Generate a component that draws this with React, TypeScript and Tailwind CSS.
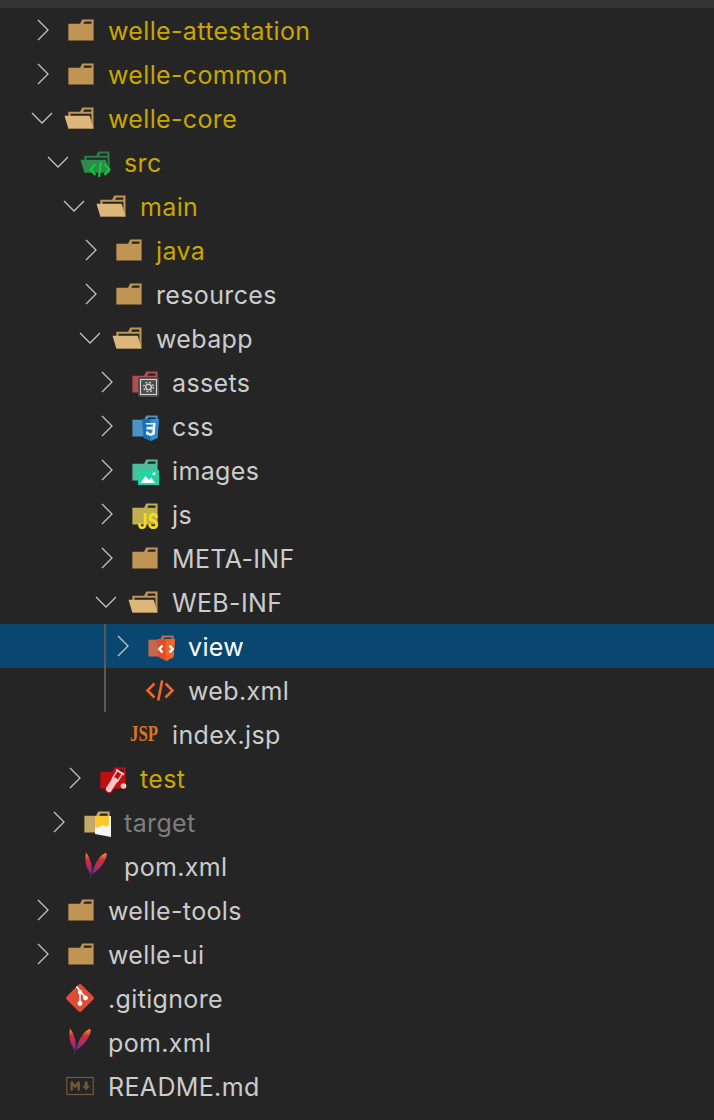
import type { ReactNode } from "react"

type IconName =
  | "folder"
  | "open"
  | "src"
  | "assets"
  | "css"
  | "images"
  | "js"
  | "view"
  | "xml"
  | "jsp"
  | "test"
  | "target"
  | "maven"
  | "git"
  | "md"

type Row = {
  name: string
  level: number
  icon: IconName
  arrow?: "right" | "down"
  tone?: "yellow" | "muted"
  selected?: boolean
}

const topRows: Row[] = [
  { name: "welle-attestation", level: 0, icon: "folder", arrow: "right", tone: "yellow" },
  { name: "welle-common", level: 0, icon: "folder", arrow: "right", tone: "yellow" },
  { name: "welle-core", level: 0, icon: "open", arrow: "down", tone: "yellow" },
  { name: "src", level: 1, icon: "src", arrow: "down", tone: "yellow" },
  { name: "main", level: 2, icon: "open", arrow: "down", tone: "yellow" },
  { name: "java", level: 3, icon: "folder", arrow: "right", tone: "yellow" },
  { name: "resources", level: 3, icon: "folder", arrow: "right" },
  { name: "webapp", level: 3, icon: "open", arrow: "down" },
  { name: "assets", level: 4, icon: "assets", arrow: "right" },
  { name: "css", level: 4, icon: "css", arrow: "right" },
  { name: "images", level: 4, icon: "images", arrow: "right" },
  { name: "js", level: 4, icon: "js", arrow: "right" },
  { name: "META-INF", level: 4, icon: "folder", arrow: "right" },
  { name: "WEB-INF", level: 4, icon: "open", arrow: "down" },
]

const webInfRows: Row[] = [
  { name: "view", level: 5, icon: "view", arrow: "right", selected: true },
  { name: "web.xml", level: 5, icon: "xml" },
]

const bottomRows: Row[] = [
  { name: "index.jsp", level: 4, icon: "jsp" },
  { name: "test", level: 2, icon: "test", arrow: "right", tone: "yellow" },
  { name: "target", level: 1, icon: "target", arrow: "right", tone: "muted" },
  { name: "pom.xml", level: 1, icon: "maven" },
  { name: "welle-tools", level: 0, icon: "folder", arrow: "right" },
  { name: "welle-ui", level: 0, icon: "folder", arrow: "right" },
  { name: ".gitignore", level: 0, icon: "git" },
  { name: "pom.xml", level: 0, icon: "maven" },
  { name: "README.md", level: 0, icon: "md" },
]

const closedFolder = (fill: string) => (
  <path d="M27.5,5.5H18.2L16.1,9.7H4.4V26.5H29.6V5.5Zm0,4.2H19.3l1.1-2.1h7.1Z" fill={fill} />
)

function Maven() {
  return (
    <>
      <defs>
        <linearGradient id="feather" gradientUnits="userSpaceOnUse" x1="0" y1="3" x2="0" y2="26">
          <stop offset="0" stopColor="#f69923" />
          <stop offset="0.3" stopColor="#d22d3a" />
          <stop offset="0.7" stopColor="#a42a7c" />
          <stop offset="1" stopColor="#5a2c82" />
        </linearGradient>
      </defs>
      <path d="M6 2.5c-1.5 7-.5 15 5 22 .8-2.500 1.200-5 .6-8.500-.8-5-2.600-10-5.600-13.500Z" fill="url(#feather)" />
      <path d="M26.500 3c-2 .2-4.500 1.500-7 4.500-3.500 4.500-6.500 11-7.500 17 4.500-3 9-7.500 12-12.500 2-3.500 3-6.500 2.500-9Z" fill="url(#feather)" />
      <path d="M12.500 21 9.800 29.500" stroke="#3d2a5c" strokeWidth="1" fill="none" />
    </>
  )
}

function FileIcon({ name }: { name: IconName }) {
  let art: ReactNode = null
  if (name === "folder") art = closedFolder("#c09553")
  if (name === "open")
    art = (
      <>
        <path d="M27.4,5.5H18.2L16.1,9.7H4.3V26.5H29.5V5.5Zm0,18.7H6.6V11.8H27.4Zm0-14.5H19.2l1-2.1h7.1V9.7Z" fill="#c09553" />
        <polygon points="25.7 13.7 0.5 13.7 4.3 26.5 29.5 26.5" fill="#dcb67a" />
      </>
    )
  if (name === "src")
    art = (
      <>
        <path d="M27.4,5.5H18.2L16.1,9.7H4.3V26.5H29.5V5.5Zm0,18.7H6.6V11.8H27.4Zm0-14.5H19.2l1-2.1h7.1V9.7Z" fill="#277f45" />
        <polygon points="25.7 13.7 0.5 13.7 4.3 26.5 29.5 26.5" fill="#2f8a4c" />
        <path d="M15.5 18 10.500 23.500l5 5.500M24.500 18l5 5.500-5 5.500M21 16l-2 15" stroke="#0ccf3a" strokeWidth="2" fill="none" />
      </>
    )
  if (name === "assets")
    art = (
      <>
        {closedFolder("#b24e52")}
        <rect x="10" y="11" width="21" height="20" rx="2" fill="#4a4a4a" />
        <rect x="12.5" y="13.5" width="16" height="15" fill="none" stroke="#d0d0d0" strokeWidth="1.2" />
        <circle cx="20.5" cy="21" r="2.8" fill="none" stroke="#d0d0d0" strokeWidth="1.4" />
        <circle cx="20.5" cy="21" r="4.8" fill="none" stroke="#d0d0d0" strokeWidth="1.4" strokeDasharray="1.8 2" />
      </>
    )
  if (name === "css")
    art = (
      <>
        {closedFolder("#4e92c4")}
        <path d="M14 9h17l-1.500 19-7 3-7-3Z" fill="#1572b6" />
        <path d="M22.500 9H31l-1.500 19-7 3Z" fill="#2e8fd6" />
        <path d="M17.500 13h10l-.8 11.300-4.200 1.700-4.300-1.600-.2-3h2.600l.1 1.200 1.800.6 1.900-.6.2-3.200h-6l-.2-2.600h6.400l.2-2.200h-6.800Z" fill="#fff" />
      </>
    )
  if (name === "images")
    art = (
      <>
        {closedFolder("#4fbf9b")}
        <rect x="10" y="16" width="21" height="15" fill="#28d2a0" />
        <path d="M12.500 29l5-7 3.500 4 2.300-2.600L27 29Z" fill="#fff" />
        <circle cx="26" cy="19.8" r="1.5" fill="#fff" />
      </>
    )
  if (name === "js")
    art = (
      <>
        {closedFolder("#c0b050")}
        <text x="9.5" y="30.5" fontFamily="Inter, sans-serif" fontWeight="700" fontSize="21" textLength="21" lengthAdjust="spacingAndGlyphs" fill="#f5de19">
          JS
        </text>
      </>
    )
  if (name === "view")
    art = (
      <>
        {closedFolder("#c2694f")}
        <path d="M13 9h18l-1.500 18-7.500 4-7.500-4Z" fill="#e44d26" />
        <path d="M22 9h9l-1.500 18-7.500 4Z" fill="#f16529" />
        <path d="M18.500 15.500 15.300 19l3.200 3.500M25.500 15.500l3.200 3.500-3.200 3.500" stroke="#fff" strokeWidth="2.4" fill="none" />
      </>
    )
  if (name === "xml")
    art = (
      <path d="M10.500 9.500 3.500 16.500l7 7M21.500 9.500l7 7-7 7M18.200 6.500l-4 20" stroke="#f1662a" strokeWidth="2.6" fill="none" />
    )
  if (name === "jsp")
    art = (
      <text x="2" y="23" fontFamily="'Liberation Serif', serif" fontWeight="700" fontSize="23" textLength="28" lengthAdjust="spacingAndGlyphs" fill="#da7423">
        JSP
      </text>
    )
  if (name === "test")
    art = (
      <>
        {closedFolder("#c10f0f")}
        <path d="M13 27 18.500 18.500" stroke="#c10f0f" strokeWidth="8.5" strokeLinecap="round" />
        <path d="M13 27 18.500 18.500" stroke="#f9c5ca" strokeWidth="6" strokeLinecap="round" />
        <path d="M21.500 8.400 16 17M26.500 11.600 21 20" stroke="#f9c5ca" strokeWidth="1.4" />
        <path d="M20 7.500l8 5.200" stroke="#f9c5ca" strokeWidth="2" />
        <circle cx="27.500" cy="24" r="2.800" fill="#f9c5ca" />
      </>
    )
  if (name === "target")
    art = (
      <>
        {closedFolder("#c4aa6a")}
        <path d="M15 10h16v21l-16-3Z" fill="#f4f4f4" />
        <path d="M15 10h14v9c-2 2-4 2-6.500 0-2 2-5 3.500-7.500 2.500Z" fill="#fdc92f" />
      </>
    )
  if (name === "maven") art = <Maven />
  if (name === "git")
    art = (
      <>
        <path d="M2.700 14.400 14.400 2.700a2.300 2.300 0 0 1 3.200 0l11.700 11.700a2.300 2.300 0 0 1 0 3.200L17.600 29.300a2.300 2.300 0 0 1-3.200 0L2.700 17.600a2.300 2.300 0 0 1 0-3.200Z" fill="#dd4c35" />
        <path d="M12.400 4.500 16 8.800v12.500M16 8.800l5.500 7" stroke="#fff" strokeWidth="1.6" fill="none" />
        <circle cx="16" cy="10" r="2.200" fill="#fff" />
        <circle cx="16" cy="21.500" r="2.400" fill="#fff" />
        <circle cx="21.500" cy="16" r="2.400" fill="#fff" />
      </>
    )
  if (name === "md")
    art = (
      <>
        <rect x="2.800" y="7.500" width="26.400" height="17" fill="none" stroke="#755838" strokeWidth="1.2" />
        <path d="M6.500 20.500v-9h2.300l2.400 3.400 2.400-3.400h2.300v9h-2.400v-5l-2.300 3.200-2.300-3.200v5ZM20.800 11.500h2.800v4.200h2.500l-3.900 4.600-3.900-4.600h2.500Z" fill="#755838" />
      </>
    )
  return (
    <svg viewBox="0 0 32 32" className="h-8 w-8 shrink-0 overflow-visible">
      {art}
    </svg>
  )
}

function Arrow({ dir }: { dir?: Row["arrow"] }) {
  return (
    <svg viewBox="0 0 32 32" className="h-8 w-8 shrink-0" fill="none" stroke="#c5c5c5" strokeWidth="1.3">
      {dir === "right" ? <path d="M12 6l10 10-10 10" /> : null}
      {dir === "down" ? <path d="M6 11l10 10 10-10" /> : null}
    </svg>
  )
}

function TreeRow({ row }: { row: Row }) {
  const tone = row.selected
    ? "text-white"
    : row.tone === "yellow"
      ? "text-[#c9a600]"
      : row.tone === "muted"
        ? "text-[#7e7e7e]"
        : "text-[#cccccc]"
  return (
    <div
      className={`flex h-11 items-center ${row.selected ? "bg-[#094771]" : ""}`}
      style={{ paddingLeft: 26 + row.level * 16 }}
    >
      <Arrow dir={row.arrow} />
      <div className="ml-1.5">
        <FileIcon name={row.icon} />
      </div>
      <span className={`ml-3 pt-[2px] text-[25px] leading-none tracking-[0.35px] ${tone}`}>{row.name}</span>
    </div>
  )
}

export default function App() {
  return (
    <div className="h-[1120px] w-[714px] overflow-hidden bg-[#252526] font-['Inter',sans-serif]">
      <div className="h-2 bg-[#333334]" />
      {topRows.map((row) => (
        <TreeRow key={row.name} row={row} />
      ))}
      <div className="relative">
        {webInfRows.map((row) => (
          <TreeRow key={row.name} row={row} />
        ))}
        <div className="absolute bottom-0 left-[104px] top-0 w-0.5 bg-[#585858]" />
      </div>
      {bottomRows.map((row) => (
        <TreeRow key={row.name + row.level} row={row} />
      ))}
    </div>
  )
}
